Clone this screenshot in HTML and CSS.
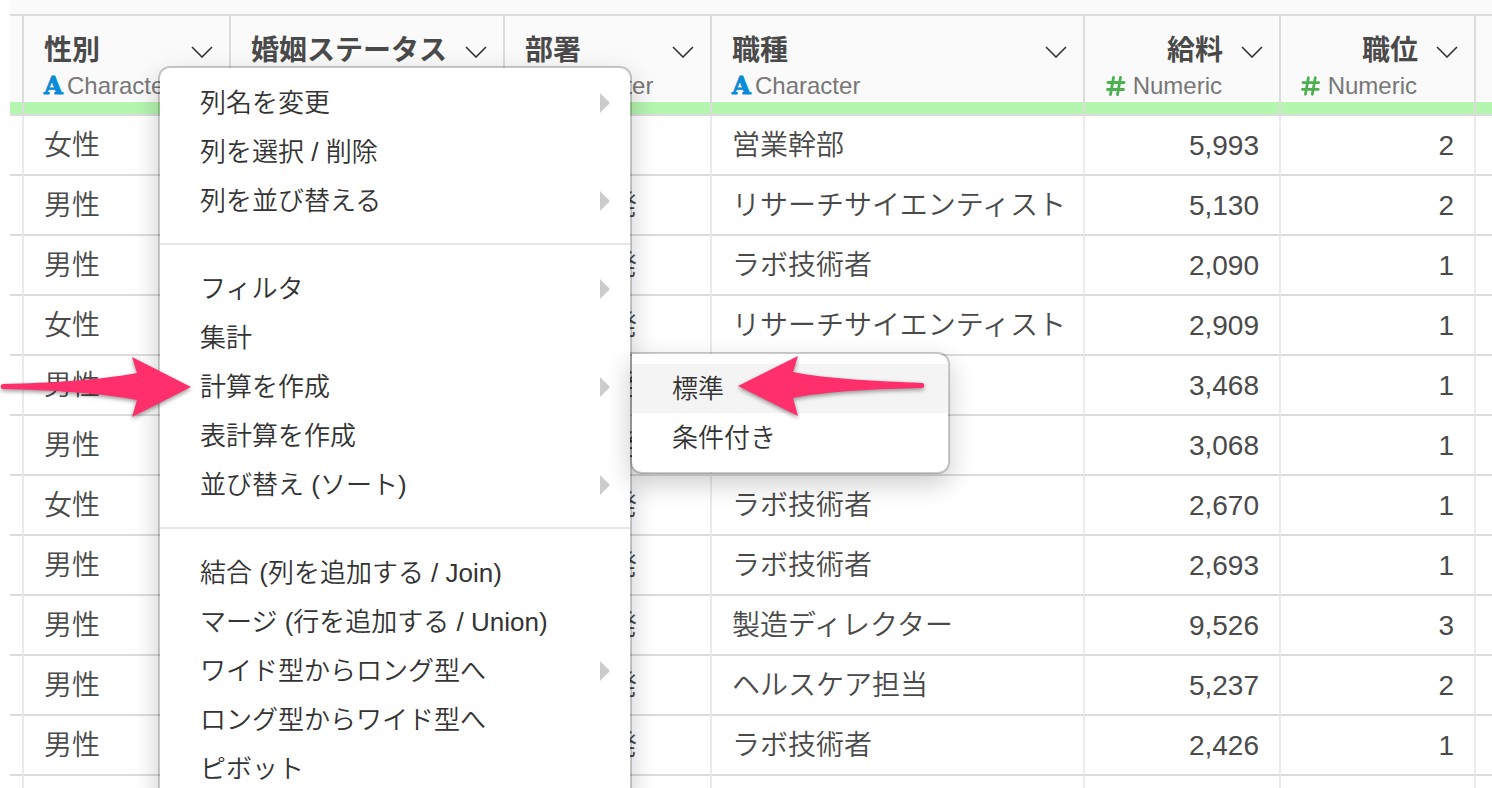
FILE: index.html
```
<!DOCTYPE html>
<html lang="ja">
<head>
<meta charset="utf-8">
<title>データテーブル</title>
<link rel="stylesheet" href="styles.css">
</head>
<body>
<svg class="defs" aria-hidden="true">
  <symbol id="chevron" viewBox="0 0 22 12"><path d="M1 1 L11 11 L21 1" fill="none" stroke="currentColor" stroke-width="1.6"/></symbol>
  <symbol id="hash" viewBox="0 0 20 20"><path d="M7.5 1.5 L4.5 18.5 M14.5 1.5 L11.5 18.5 M2 6.5 H18 M1.5 13.5 H17.5" fill="none" stroke="currentColor" stroke-width="2.8" stroke-linecap="round"/></symbol>
  <symbol id="caret" viewBox="0 0 10 20"><path d="M0 0 L10 10 L0 20 Z" fill="currentColor"/></symbol>
</svg>
<main class="page">
  <div class="toolbar"></div>
  <table class="grid">
    <colgroup>
      <col class="col-index"><col class="col-gender"><col class="col-marital"><col class="col-dept"><col class="col-job"><col class="col-salary"><col class="col-level"><col>
    </colgroup>
    <thead>
      <tr>
        <th><div class="head"></div><div class="bar"></div></th>
        <th><div class="head"><div class="title">性別<button class="open" aria-label="性別のメニュー"><svg><use href="#chevron"/></svg></button></div><div class="type"><span class="type-a">A</span>Character</div></div><div class="bar"></div></th>
        <th><div class="head"><div class="title">婚姻ステータス<button class="open" aria-label="婚姻ステータスのメニュー"><svg><use href="#chevron"/></svg></button></div></div><div class="bar"></div></th>
        <th><div class="head"><div class="title">部署<button class="open" aria-label="部署のメニュー"><svg><use href="#chevron"/></svg></button></div><div class="type"><span class="type-a">A</span>Character</div></div><div class="bar"></div></th>
        <th><div class="head"><div class="title">職種<button class="open" aria-label="職種のメニュー"><svg><use href="#chevron"/></svg></button></div><div class="type"><span class="type-a">A</span>Character</div></div><div class="bar"></div></th>
        <th><div class="head head-num"><div class="title">給料<button class="open" aria-label="給料のメニュー"><svg><use href="#chevron"/></svg></button></div><div class="type"><svg class="type-n"><use href="#hash"/></svg>Numeric</div></div><div class="bar"></div></th>
        <th><div class="head head-num"><div class="title">職位<button class="open" aria-label="職位のメニュー"><svg><use href="#chevron"/></svg></button></div><div class="type"><svg class="type-n"><use href="#hash"/></svg>Numeric</div></div><div class="bar"></div></th>
        <th><div class="head"></div><div class="bar"></div></th>
      </tr>
    </thead>
    <tbody>
      <tr><td></td><td>女性</td><td></td><td></td><td>営業幹部</td><td class="num">5,993</td><td class="num">2</td><td></td></tr>
      <tr><td></td><td>男性</td><td></td><td>研究開発</td><td>リサーチサイエンティスト</td><td class="num">5,130</td><td class="num">2</td><td></td></tr>
      <tr><td></td><td>男性</td><td></td><td>研究開発</td><td>ラボ技術者</td><td class="num">2,090</td><td class="num">1</td><td></td></tr>
      <tr><td></td><td>女性</td><td></td><td>研究開発</td><td>リサーチサイエンティスト</td><td class="num">2,909</td><td class="num">1</td><td></td></tr>
      <tr><td></td><td>男性</td><td></td><td>研究開発</td><td></td><td class="num">3,468</td><td class="num">1</td><td></td></tr>
      <tr><td></td><td>男性</td><td></td><td>研究開発</td><td></td><td class="num">3,068</td><td class="num">1</td><td></td></tr>
      <tr><td></td><td>女性</td><td></td><td>研究開発</td><td>ラボ技術者</td><td class="num">2,670</td><td class="num">1</td><td></td></tr>
      <tr><td></td><td>男性</td><td></td><td>研究開発</td><td>ラボ技術者</td><td class="num">2,693</td><td class="num">1</td><td></td></tr>
      <tr><td></td><td>男性</td><td></td><td>研究開発</td><td>製造ディレクター</td><td class="num">9,526</td><td class="num">3</td><td></td></tr>
      <tr><td></td><td>男性</td><td></td><td>研究開発</td><td>ヘルスケア担当</td><td class="num">5,237</td><td class="num">2</td><td></td></tr>
      <tr><td></td><td>男性</td><td></td><td>研究開発</td><td>ラボ技術者</td><td class="num">2,426</td><td class="num">1</td><td></td></tr>
      <tr><td></td><td></td><td></td><td></td><td></td><td></td><td></td><td></td></tr>
    </tbody>
  </table>

  <ul class="menu column-menu">
    <li><button class="item">列名を変更<svg class="caret"><use href="#caret"/></svg></button></li>
    <li><button class="item">列を選択 / 削除</button></li>
    <li><button class="item">列を並び替える<svg class="caret"><use href="#caret"/></svg></button></li>
    <li class="divider"></li>
    <li><button class="item">フィルタ<svg class="caret"><use href="#caret"/></svg></button></li>
    <li><button class="item">集計</button></li>
    <li class="parent"><button class="item">計算を作成<svg class="caret"><use href="#caret"/></svg></button>
      <ul class="menu submenu">
        <li><button class="item item-active">標準</button></li>
        <li><button class="item">条件付き</button></li>
      </ul>
    </li>
    <li><button class="item">表計算を作成</button></li>
    <li><button class="item">並び替え (ソート)<svg class="caret"><use href="#caret"/></svg></button></li>
    <li class="divider"></li>
    <li><button class="item">結合 (列を追加する / Join)</button></li>
    <li><button class="item">マージ (行を追加する / Union)</button></li>
    <li><button class="item">ワイド型からロング型へ<svg class="caret"><use href="#caret"/></svg></button></li>
    <li><button class="item">ロング型からワイド型へ</button></li>
    <li><button class="item">ピボット</button></li>
  </ul>

  <svg class="pointer pointer-right" viewBox="0 0 192 62"><path d="M3 28 C50 27 100 24 137 17 L132 1 L191 31 L132 61 L137 44 C100 37 50 34 3 33 C0 33 0 28 3 28 Z"/></svg>
  <svg class="pointer pointer-left" viewBox="0 0 188 62"><path d="M184 28 C140 26 90 24 55 17 L60 1 L0 31 L60 61 L55 43 C90 36 140 34 184 33 C187 33 187 28 184 28 Z"/></svg>
</main>
</body>
</html>
```

FILE: styles.css
```
* { box-sizing: border-box; }

body {
  margin: 0;
  background: #fff;
  color: #4a4a4a;
  font-family: "Liberation Sans", "Noto Sans CJK JP", sans-serif;
}

button {
  border: 0;
  padding: 0;
  background: none;
  color: inherit;
  font: inherit;
}

.defs { position: absolute; width: 0; height: 0; }

.page {
  position: relative;
  height: 100vh;
  padding-left: 10px;
  overflow: hidden;
}

.toolbar { height: 14px; background: #fafafa; }

/* Data grid */
.grid {
  width: 100%;
  table-layout: fixed;
  border-collapse: separate;
  border-spacing: 0;
}

.col-index { width: 14px; }
.col-gender, .col-dept { width: 207px; }
.col-marital { width: 274px; }
.col-job { width: 373px; }
.col-salary { width: 196px; }
.col-level { width: 195px; }

.grid th {
  padding: 0;
  border: solid #dcdcdc;
  border-width: 2px 2px 2px 0;
  background: #fafafa;
  text-align: left;
  font-weight: 400;
}

.head { height: 86px; padding: 17px 16px 0 20px; }
.grid th:first-child .head, .grid th:last-child .head { padding: 0; }

.title {
  display: flex;
  justify-content: space-between;
  align-items: center;
  height: 36px;
  font-size: 28px;
  line-height: 36px;
  font-weight: 700;
  white-space: nowrap;
}

.open { display: flex; padding-top: 2px; color: #333; }
.open svg { width: 22px; height: 12px; }

.type {
  display: flex;
  align-items: center;
  height: 30px;
  margin-top: 2px;
  font-size: 24px;
  line-height: 30px;
  color: #777;
}

.type-a {
  width: 23px;
  font-family: "DejaVu Serif", serif;
  font-weight: 700;
  color: #0a8bd8;
  -webkit-text-stroke: 1px #0a8bd8;
}

.type-n { width: 20px; height: 20px; margin-right: 7px; color: #4caf50; }

.head-num .title { justify-content: flex-end; gap: 18px; }
.head-num .type { justify-content: flex-end; padding-right: 41px; }

.bar { height: 12px; background: #b4f5af; }

.grid td {
  height: 60px;
  padding: 2px 20px 0;
  border-right: 2px solid #ebebeb;
  border-bottom: 2px solid #dcdcdc;
  font-size: 28px;
  line-height: 40px;
  font-weight: 350;
  white-space: nowrap;
}

.grid td:first-child, .grid td:last-child { padding: 0; }
.grid th:last-child, .grid td:last-child { border-right: 0; }
.grid .num { text-align: right; }

/* Menus */
.menu {
  position: absolute;
  margin: 0;
  padding: 10px 0;
  list-style: none;
  border: 2px solid rgba(0, 0, 0, 0.2);
  border-radius: 12px;
  background: #fff;
  background-clip: padding-box;
  box-shadow: 0 10px 26px rgba(0, 0, 0, 0.2);
  color: #333;
  font-size: 26px;
  font-weight: 350;
}

.column-menu { top: 66px; left: 158px; width: 474px; }
.parent { position: relative; }
.submenu { top: -10px; left: 100%; width: 320px; border-top-left-radius: 0; }

.item {
  display: flex;
  justify-content: space-between;
  align-items: center;
  width: 100%;
  height: 49px;
  padding: 0 20px 0 40px;
  line-height: 40px;
  white-space: nowrap;
}

.item-active { background: #f4f4f4; }
.caret { width: 10px; height: 20px; color: #ccc; }
.divider { height: 2px; margin: 18px 0 19px; background: #e5e5e5; }

/* Annotation arrows */
.pointer {
  position: absolute;
  height: 62px;
  fill: #ff2f6c;
  filter: drop-shadow(0 2px 2px rgba(0, 0, 0, 0.4));
}

.pointer-right { top: 356px; left: 0; width: 192px; }
.pointer-left { top: 355px; left: 738px; width: 188px; }
```
